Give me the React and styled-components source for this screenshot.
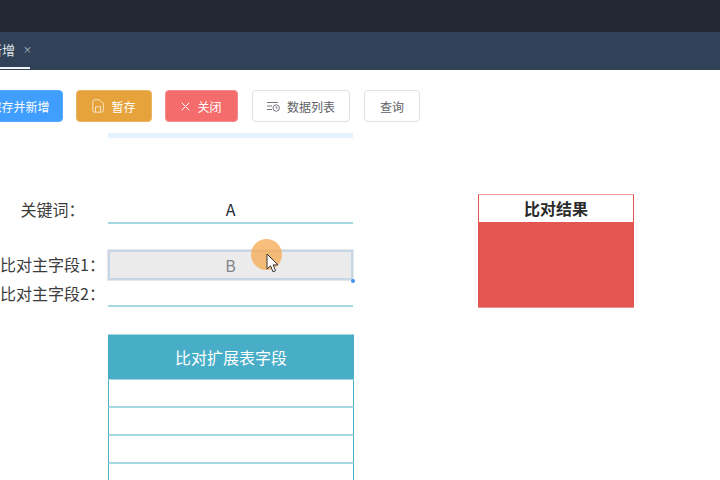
import React from 'react'
import styled, {createGlobalStyle} from 'styled-components'

const CJK = `"Noto Sans CJK SC", "Noto Sans", sans-serif`

const GlobalStyle = createGlobalStyle`
  html, body {
    margin: 0;
    padding: 0;
    background: #fff;
    overflow: hidden;
  }
  body {
    font-family: ${CJK};
  }
`

const Page = styled.div`
  position: relative;
  width: 720px;
  height: 480px;
  overflow: hidden;
  background: #fff;
`

const TopBar = styled.div`
  height: 32px;
  background: #232833;
`

const TabBar = styled.div`
  height: 38px;
  background: #304158;
  display: flex;
  align-items: stretch;
`

const Tab = styled.div`
  display: flex;
  align-items: center;
  gap: 8px;
  width: 60px;
  margin-left: -30px;
  padding-left: 19px;
  box-sizing: border-box;
  height: 37px;
  border-bottom: 2px solid #f2f4f7;
  color: #dfe4ea;
  font-size: 13px;
  white-space: nowrap;
`

const TabClose = styled.span`
  font-size: 9px;
  line-height: 1;
  color: #c5ccd6;
`

const Toolbar = styled.div`
  display: flex;
  gap: 13px;
  padding-top: 20px;
  height: 32px;
`

const Button = styled.div`
  display: flex;
  align-items: center;
  justify-content: center;
  gap: 7px;
  box-sizing: border-box;
  height: 32px;
  width: ${p => p.$w}px;
  margin-left: ${p => p.$ml || 0}px;
  border-radius: 4px;
  font-size: 12px;
  white-space: nowrap;
  color: ${p => p.$plain ? '#606266' : '#fff'};
  background: ${p => p.$bg || '#fff'};
  border: 1px solid ${p => p.$border || '#dcdfe6'};
`

const Strip = styled.div`
  width: 245px;
  height: 5px;
  margin: 11px 0 0 108px;
  background: #e6f2fd;
`

const Sheet = styled.div`
  display: flex;
  align-items: flex-start;
  gap: 124px;
  padding-top: 58px;
`

const Form = styled.div`
  width: 354px;
  flex: none;
`

const Row = styled.div`
  display: flex;
  height: ${p => p.$h}px;
  margin-bottom: ${p => p.$mb || 0}px;
`

const Label = styled.div`
  width: 108px;
  padding: 0 3px 2px 0;
  box-sizing: border-box;
  flex: none;
  display: flex;
  align-items: center;
  justify-content: center;
  font-size: 16px;
  color: #3c3c3c;
  white-space: nowrap;
`

const Field = styled.div`
  position: relative;
  width: 245px;
  box-sizing: border-box;
  display: flex;
  align-items: center;
  justify-content: center;
  padding-bottom: 1px;
  font-size: 16px;
  color: #222a35;
  border-bottom: 2px solid #a3d7e2;
`

const SelectedField = styled(Field)`
  color: #85868a;
  background: #ebebeb;
  border: 2px solid #c6d6e4;
  outline: 1px solid #e6e6e6;
`

const Handle = styled.span`
  position: absolute;
  right: -4px;
  bottom: -5px;
  width: 4px;
  height: 4px;
  border-radius: 50%;
  background: #3d94f6;
`

const ExtTable = styled.div`
  width: 246px;
  margin: 27px 0 0 108px;
  box-sizing: border-box;
`

const ExtHead = styled.div`
  height: 46px;
  box-sizing: border-box;
  display: flex;
  align-items: center;
  justify-content: center;
  padding-bottom: 1px;
  background: #48adc7;
  border-top: 1px solid #a3d7e2;
  border-bottom: 1px solid #a3d7e2;
  color: #fff;
  font-size: 16px;
`

const ExtRow = styled.div`
  height: 28px;
  box-sizing: border-box;
  border-left: 1px solid #48adc7;
  border-right: 1px solid #48adc7;
  border-bottom: 2px solid #a3d7e2;
`

const Result = styled.div`
  width: 156px;
  flex: none;
  margin-top: -2px;
`

const ResultTitle = styled.div`
  height: 28px;
  box-sizing: border-box;
  display: flex;
  align-items: center;
  justify-content: center;
  padding-bottom: 1px;
  border: 1px solid #e35651;
  border-top-color: #f0a3a1;
  border-bottom: none;
  font-size: 16px;
  font-weight: 700;
  color: #2b2b2b;
`

const ResultBody = styled.div`
  height: 86px;
  background: #e35651;
  border-bottom: 1px solid #f0928f;
  box-sizing: border-box;
`

const Spot = styled.div`
  position: absolute;
  left: 251px;
  top: 239px;
  width: 31px;
  height: 31px;
  border-radius: 50%;
  background: rgba(245, 170, 80, 0.75);
`

const Cursor = styled.svg`
  position: absolute;
  left: 266px;
  top: 253px;
`

const SaveIcon = () => (
  <svg width="12" height="14" viewBox="0 0 12 14" fill="none" stroke="#f8e3c0" strokeWidth="1">
    <path d="M2.500.8h4.800l4 3.400v7.300a1.700 1.700 0 0 1-1.700 1.700h-7.100a1.700 1.700 0 0 1-1.700-1.700v-9a1.700 1.700 0 0 1 1.700-1.700z" />
    <path d="M3.500 13v-5.200h5v5.200" />
  </svg>
)

const CloseIcon = () => (
  <svg width="9" height="9" viewBox="0 0 9 9" fill="none" stroke="#fff" strokeWidth="1">
    <path d="M.7.7l7.600 7.600M8.300.7L.7 8.300" />
  </svg>
)

const ListIcon = () => (
  <svg width="13" height="11" viewBox="0 0 13 11" fill="none" stroke="#75787f" strokeWidth="1">
    <path d="M0 1.500h11M0 5h5M0 8.500h5" />
    <circle cx="9.200" cy="7" r="3.200" />
    <path d="M9.200 5.300v1.800h1.400" />
  </svg>
)

const App = () => (
  <Page>
    <GlobalStyle />
    <TopBar />
    <TabBar>
      <Tab>
        新增
        <TabClose>×</TabClose>
      </Tab>
    </TabBar>
    <Toolbar>
      <Button $w={87} $ml={-24} $bg="#409eff" $border="#53a8ff">保存并新增</Button>
      <Button $w={76} $bg="#e6a33c" $border="#ebb563"><SaveIcon />暂存</Button>
      <Button $w={73} $bg="#f56c6c" $border="#f78989"><CloseIcon />关闭</Button>
      <Button $w={98} $ml={1} $plain><ListIcon />数据列表</Button>
      <Button $w={56} $ml={1} $plain>查询</Button>
    </Toolbar>
    <Strip />
    <Sheet>
      <Form>
        <Row $h={28} $mb={26}>
          <Label>关键词：</Label>
          <Field>A</Field>
        </Row>
        <Row $h={30}>
          <Label>比对主字段1：</Label>
          <SelectedField>B<Handle /></SelectedField>
        </Row>
        <Row $h={27}>
          <Label>比对主字段2：</Label>
          <Field />
        </Row>
        <ExtTable>
          <ExtHead>比对扩展表字段</ExtHead>
          <ExtRow />
          <ExtRow />
          <ExtRow />
          <ExtRow />
        </ExtTable>
      </Form>
      <Result>
        <ResultTitle>比对结果</ResultTitle>
        <ResultBody />
      </Result>
    </Sheet>
    <Spot />
    <Cursor width="14" height="21" viewBox="0 0 14 21">
      <path d="M1 1v15l3.500-3.200 2.500 6 2.600-1.100-2.500-5.800h4.900z" fill="#fff" stroke="#333" strokeWidth="1" />
    </Cursor>
  </Page>
)

export default App
